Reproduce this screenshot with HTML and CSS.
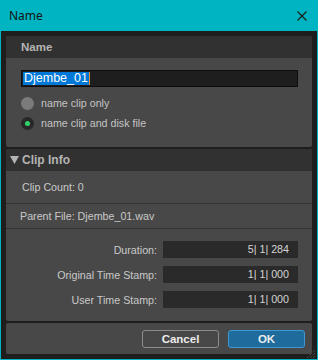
FILE: index.html
```html
<!DOCTYPE html>
<html lang="en">
<head>
    <meta charset="UTF-8">
    <meta name="viewport" content="width=device-width, initial-scale=1.0">
    <title>Name</title>
    <link rel="stylesheet" href="styles.css">
</head>
<body>
    <div class="window">
        <div class="titlebar">
            <span class="title">Name</span>
            <svg class="close" width="10" height="10" viewBox="0 0 10 10">
                <path d="M0.5 0.5 L9.5 9.5 M9.5 0.5 L0.5 9.5" stroke="#1a1a1a" stroke-width="1.1" fill="none"/>
            </svg>
        </div>

        <div class="content">
            <!-- Name panel -->
            <section class="panel panel-name">
                <div class="panel-head">Name</div>
                <div class="name-body">
                    <div class="name-field"><span class="sel">Djembe_01</span><span class="caret"></span></div>
                    <div class="radio-row"><span class="radio"></span>name clip only</div>
                    <div class="radio-row"><span class="radio on"></span>name clip and disk file</div>
                </div>
            </section>

            <!-- Clip info panel -->
            <section class="panel panel-info">
                <div class="panel-head head-toggle">
                    <svg class="arrow" width="9" height="8" viewBox="0 0 9 8"><path d="M0 0 H9 L4.5 8 Z" fill="#b4b4b4"/></svg>
                    Clip Info
                </div>
                <div class="info-row count">Clip Count: 0</div>
                <div class="info-row parent">Parent File: Djembe_01.wav</div>
                <div class="times">
                    <div class="time-row">
                        <span class="time-label">Duration:</span>
                        <span class="time-value">5| 1| 284</span>
                    </div>
                    <div class="time-row">
                        <span class="time-label">Original Time Stamp:</span>
                        <span class="time-value">1| 1| 000</span>
                    </div>
                    <div class="time-row">
                        <span class="time-label">User Time Stamp:</span>
                        <span class="time-value">1| 1| 000</span>
                    </div>
                </div>
            </section>

            <!-- Buttons -->
            <section class="panel panel-buttons">
                <button class="btn">Cancel</button>
                <button class="btn primary">OK</button>
            </section>

            <svg class="grip" width="12" height="12" viewBox="0 0 12 12">
                <path d="M11 3 L3 11 M11 6 L6 11 M11 9 L9 11" stroke="#5e5e5e" stroke-width="1" stroke-dasharray="1 1" fill="none"/>
            </svg>
        </div>
    </div>
</body>
</html>
```

FILE: styles.css
```css
body {
    margin: 0;
    background: #00b5c1;
}

.window {
    width: 318px;
    height: 360px;
    background: #00b5c1;
    display: flex;
    flex-direction: column;
    font-family: "Liberation Sans", Arial, sans-serif;
}

.titlebar {
    height: 31px;
    flex: none;
    display: flex;
    align-items: center;
    justify-content: space-between;
    padding: 0 11px 0 9px;
}

.title {
    font-family: "Noto Sans", "Open Sans", sans-serif;
    font-size: 12px;
    color: #111;
}

.content {
    position: relative;
    flex: 1;
    margin: 0 1px 1px;
    background: #1e1e1e;
    padding: 5px;
    display: flex;
    flex-direction: column;
    gap: 2px;
}

.panel {
    background: #484848;
    border-radius: 2px;
    overflow: hidden;
}

.panel-head {
    height: 22px;
    background: #313131;
    display: flex;
    align-items: center;
    padding-left: 15px;
    font-size: 11.5px;
    font-weight: bold;
    color: #b4b4b4;
}

/* Name panel */
.panel-name {
    height: 111px;
}

.name-body {
    padding: 12px 14px 0 15px;
}

.name-field {
    height: 17px;
    box-sizing: border-box;
    border: 1px solid #0c0c0c;
    background: #1e1e1e;
    display: flex;
    align-items: center;
    padding-left: 1px;
    margin-bottom: 6px;
}

.sel {
    background: #0078d7;
    color: #fff;
    font-size: 12.5px;
    line-height: 13px;
    padding: 0 1px;
}

.caret {
    width: 1px;
    height: 13px;
    background: #e8892b;
}

.radio-row {
    height: 20px;
    display: flex;
    align-items: center;
    font-size: 10.7px;
    color: #c4c4c4;
}

.radio {
    width: 13px;
    height: 13px;
    border-radius: 50%;
    background: #7b7b7b;
    margin-right: 7px;
    display: flex;
    align-items: center;
    justify-content: center;
}

.radio.on {
    background: #282828;
}

.radio.on::after {
    content: "";
    width: 5px;
    height: 5px;
    border-radius: 50%;
    background: #2fd36b;
}

/* Clip info panel */
.panel-info {
    height: 172px;
}

.head-toggle {
    padding-left: 4px;
    font-size: 12px;
}

.arrow {
    margin-right: 3px;
}

.info-row {
    display: flex;
    align-items: center;
    font-size: 10.7px;
    color: #c8c8c8;
    border-bottom: 1px solid #333;
}

.info-row.count {
    height: 32px;
    padding-left: 16px;
}

.info-row.parent {
    height: 24px;
    padding-left: 14px;
}

.times {
    padding: 12px 14px 0 0;
    display: flex;
    flex-direction: column;
    gap: 8px;
}

.time-row {
    display: grid;
    grid-template-columns: 1fr 135px;
    column-gap: 6px;
    align-items: center;
    font-size: 10.7px;
    color: #c8c8c8;
}

.time-label {
    text-align: right;
}

.time-value {
    height: 17px;
    line-height: 17px;
    background: #2a2a2a;
    text-align: right;
    padding-right: 9px;
    color: #d4d4d4;
}

/* Buttons */
.panel-buttons {
    height: 31px;
    display: flex;
    justify-content: flex-end;
    align-items: flex-start;
    gap: 9px;
    padding: 7px 7px 0 0;
    box-sizing: border-box;
}

.btn {
    width: 77px;
    height: 18px;
    border-radius: 3px;
    border: 1px solid #8c8c8c;
    background: transparent;
    color: #ececec;
    font-family: "Liberation Sans", Arial, sans-serif;
    font-size: 11.5px;
    font-weight: bold;
    padding: 0;
}

.btn.primary {
    background: #1f6b9c;
    border-color: #3d97d3;
}

.grip {
    position: absolute;
    right: 1px;
    bottom: 0;
}
```
